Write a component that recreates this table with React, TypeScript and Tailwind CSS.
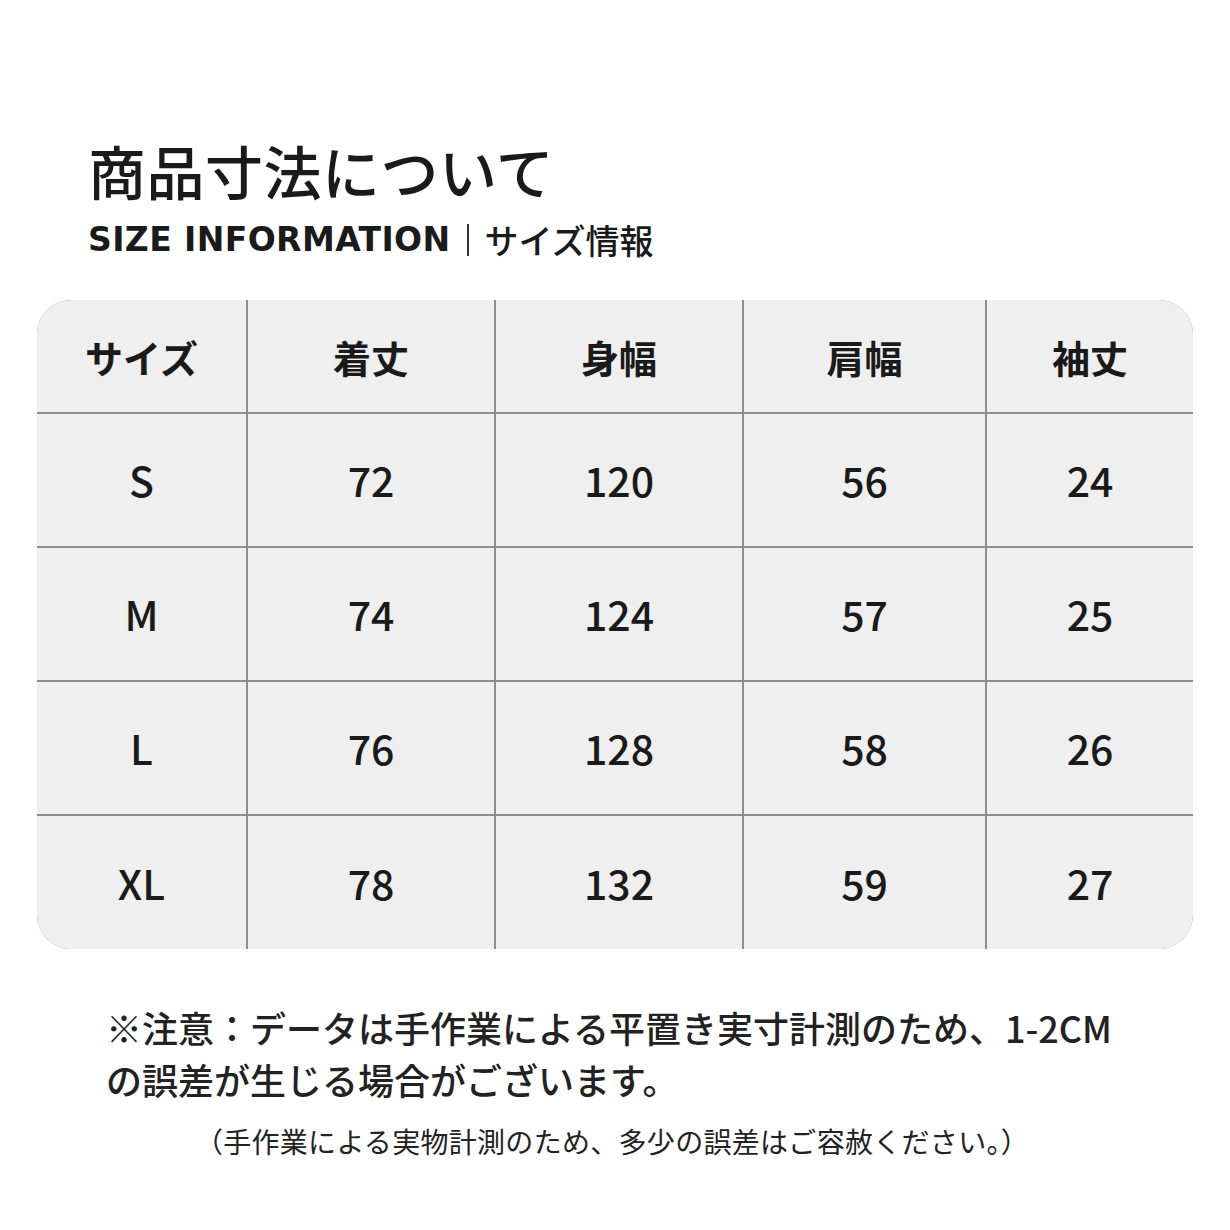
const headers = ["サイズ", "着丈", "身幅", "肩幅", "袖丈"];

const rows = [
  ["S", "72", "120", "56", "24"],
  ["M", "74", "124", "57", "25"],
  ["L", "76", "128", "58", "26"],
  ["XL", "78", "132", "59", "27"],
];

const font = { fontFamily: '"Noto Sans CJK JP", "Noto Sans", sans-serif' };

export default function App() {
  return (
    <div
      className="w-[1230px] h-[1230px] bg-white text-[#1a1a1a] pt-[136px]"
      style={font}
    >
      <div className="pl-[88px]">
        <h1 className="text-[58px] font-medium leading-[68px] tracking-[0.5px]">
          商品寸法について
        </h1>
        <div className="mt-[16px] flex items-center text-[34px] leading-[40px]">
          <span
            className="font-bold text-[33px] tracking-[0.4px]"
            style={{ fontFamily: '"DejaVu Sans", "Noto Sans", sans-serif' }}
          >
            SIZE INFORMATION
          </span>
          <span className="mx-[16px] h-[32px] w-[2px] bg-[#333]" />
          <span className="font-medium">サイズ情報</span>
        </div>
      </div>

      <div className="mx-[37px] mt-[40px] overflow-hidden rounded-[34px]">
        <div className="grid grid-cols-[209px_246px_246px_241px_1fr] grid-rows-[112px_132px_132px_132px_133px] gap-[2px] bg-[#8e8e8e]">
          {headers.map((h) => (
            <div
              key={h}
              className="flex items-center justify-center bg-[#efefef] text-[38px] font-bold"
            >
              {h}
            </div>
          ))}
          {rows.map((r) =>
            r.map((v, i) => (
              <div
                key={r[0] + i}
                className="flex items-center justify-center bg-[#efefef] text-[41px] font-medium"
              >
                {v}
              </div>
            ))
          )}
        </div>
      </div>

      <div className="pl-[106px] mt-[52px] text-[36px] font-medium leading-[52px] text-[#222]">
        <p>※注意：データは手作業による平置き実寸計測のため、1-2CM</p>
        <p>の誤差が生じる場合がございます。</p>
      </div>
      <p className="mt-[18px] text-center text-[28px] tracking-[0.3px] leading-[36px] text-[#222] pr-[6px]">
        （手作業による実物計測のため、多少の誤差はご容赦ください。）
      </p>
    </div>
  );
}
